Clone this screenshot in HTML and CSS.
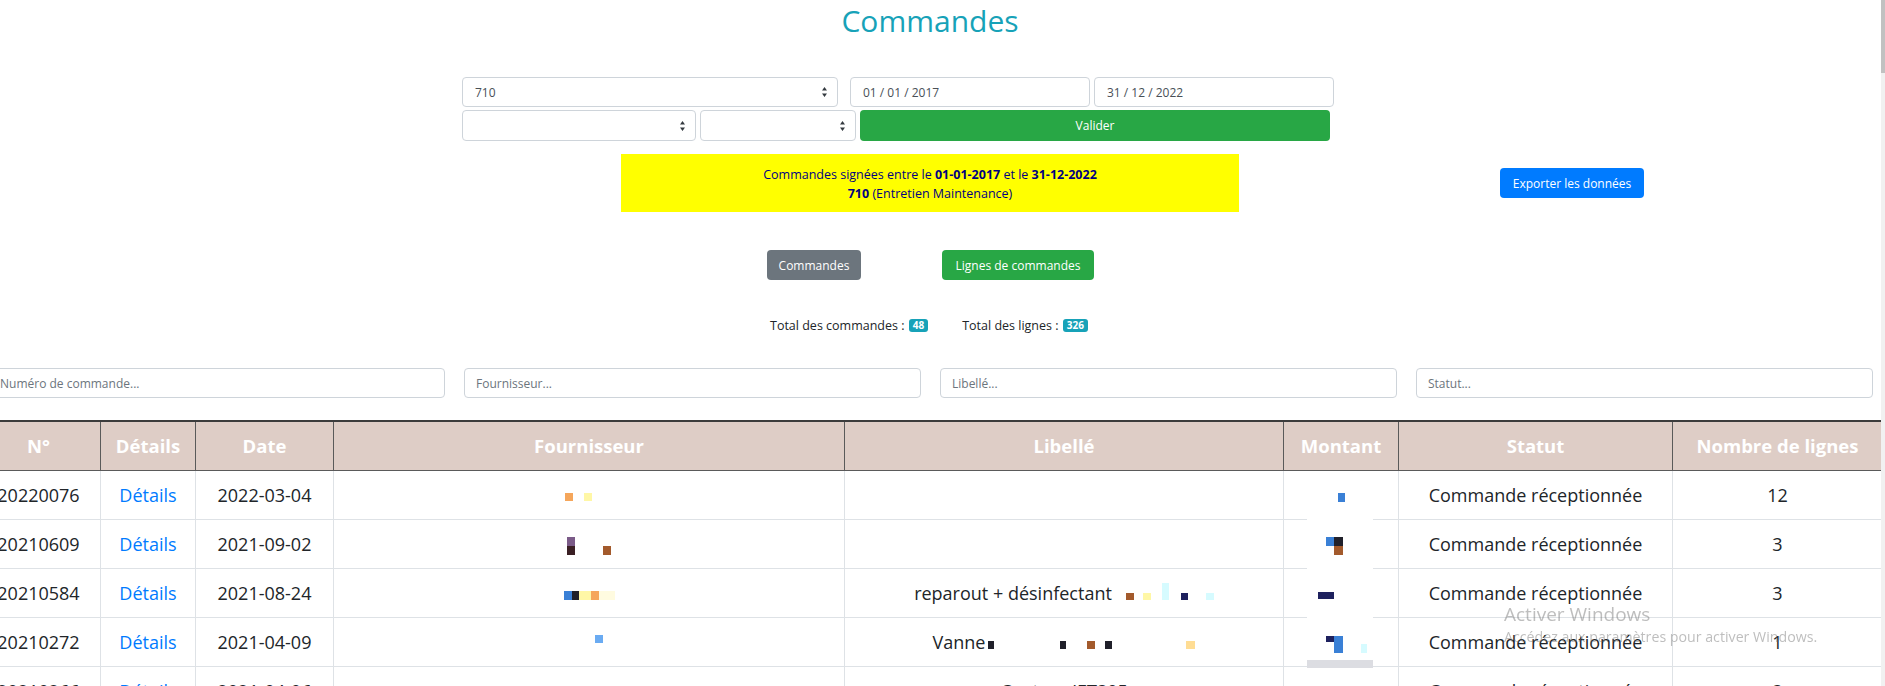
FILE: index.html
```html
<!DOCTYPE html>
<html lang="fr">
<head>
<meta charset="utf-8">
<title>Commandes</title>
<link rel="stylesheet" href="styles.css">
</head>
<body>
<div class="page">
  <h1 class="title">Commandes</h1>

  <div class="filters">
    <div class="frow frow-1">
      <div class="ctrl sel sel-main"><span>710</span><svg class="arr" width="5" height="10" viewBox="0 0 5 10"><path d="M2.5 0 L5 3.6 L0 3.6 Z M2.5 10 L5 6.4 L0 6.4 Z" fill="#343a40"/></svg></div>
      <div class="ctrl date">01 / 01 / 2017</div>
      <div class="ctrl date">31 / 12 / 2022</div>
    </div>
    <div class="frow frow-2">
      <div class="ctrl sel sel-a"><span></span><svg class="arr" width="5" height="10" viewBox="0 0 5 10"><path d="M2.5 0 L5 3.6 L0 3.6 Z M2.5 10 L5 6.4 L0 6.4 Z" fill="#343a40"/></svg></div>
      <div class="ctrl sel sel-b"><span></span><svg class="arr" width="5" height="10" viewBox="0 0 5 10"><path d="M2.5 0 L5 3.6 L0 3.6 Z M2.5 10 L5 6.4 L0 6.4 Z" fill="#343a40"/></svg></div>
      <button class="btn btn-valider">Valider</button>
    </div>
  </div>

  <div class="info-row">
    <div class="notice">
      <div>Commandes signées entre le <b>01-01-2017</b> et le <b>31-12-2022</b></div>
      <div><b>710</b> (Entretien Maintenance)</div>
    </div>
    <button class="btn btn-export">Exporter les données</button>
  </div>

  <div class="tabs">
    <button class="btn btn-gray">Commandes</button>
    <button class="btn btn-lignes">Lignes de commandes</button>
  </div>

  <div class="totals">
    <span class="total">Total des commandes : <span class="badge">48</span></span>
    <span class="total">Total des lignes : <span class="badge">326</span></span>
  </div>

  <div class="search-row">
    <div class="ctrl search">Numéro de commande...</div>
    <div class="ctrl search">Fournisseur...</div>
    <div class="ctrl search">Libellé...</div>
    <div class="ctrl search">Statut...</div>
  </div>

  <div class="table-wrap">
    <table class="orders">
      <colgroup>
        <col class="w1"><col class="w2"><col class="w3"><col class="w4"><col class="w5"><col class="w6"><col class="w7"><col class="w8">
      </colgroup>
      <thead>
        <tr>
          <th>N°</th><th>Détails</th><th>Date</th><th>Fournisseur</th><th>Libellé</th><th>Montant</th><th>Statut</th><th>Nombre de lignes</th>
        </tr>
      </thead>
      <tbody>
        <tr>
          <td>20220076</td>
          <td><a class="lnk" href="#">Détails</a></td>
          <td>2022-03-04</td>
          <td><span class="grp sh-l22"><span class="sq o"></span><span class="sq y ml11"></span></span></td>
          <td></td>
          <td><span class="grp"><span class="sq b w7 h9"></span></span></td>
          <td>Commande réceptionnée</td>
          <td>12</td>
        </tr>
        <tr>
          <td>20210609</td>
          <td><a class="lnk" href="#">Détails</a></td>
          <td>2021-09-02</td>
          <td><span class="grp end"><span class="stack"><span class="sq pu h9"></span><span class="sq dk h9"></span></span><span class="sq br h9 ml28"></span></span></td>
          <td></td>
          <td><span class="grp sh-l14"><span class="quad"><span class="q b"></span><span class="q d"></span><span class="q"></span><span class="q br"></span></span></span></td>
          <td>Commande réceptionnée</td>
          <td>3</td>
        </tr>
        <tr>
          <td>20210584</td>
          <td><a class="lnk" href="#">Détails</a></td>
          <td>2021-08-24</td>
          <td><span class="grp"><span class="sq b h9"></span><span class="sq d w7 h9"></span><span class="sq y w12 h9"></span><span class="sq o h9"></span><span class="sq fy w16 h9"></span></span></td>
          <td>reparout + désinfectant<span class="sq br ml14 h7"></span><span class="sq y ml9 h7"></span><span class="sq cy w7 h17 ml11"></span><span class="sq nv w7 h7 ml12"></span><span class="sq cy h7 ml18"></span></td>
          <td><span class="grp sh-l30"><span class="sq nv w16 h7"></span></span></td>
          <td>Commande réceptionnée</td>
          <td>3</td>
        </tr>
        <tr>
          <td>20210272</td>
          <td><a class="lnk" href="#">Détails</a></td>
          <td>2021-04-09</td>
          <td><span class="grp sh-r20 up10"><span class="sq lb h8"></span></span></td>
          <td>Vanne<span class="sq d w6 h8 ml3"></span><span class="sq d w6 h8 ml66"></span><span class="sq br h8 ml21"></span><span class="sq d w7 h8 ml10"></span><span class="sq ly w9 h8 ml74"></span></td>
          <td><span class="grp start sh-r10"><span class="sq nv h6"></span><span class="sq b w9 h17"></span><span class="sq cy w6 h9 ml18 dn8"></span></span></td>
          <td>Commande réceptionnée</td>
          <td>1</td>
        </tr>
        <tr>
          <td>20210266</td>
          <td><a class="lnk" href="#">Détails</a></td>
          <td>2021-04-06</td>
          <td><span class="grp top"><span class="sq cy w6 h8"></span><span class="sq b w10 h8"></span><span class="sq cy w10 h8 ml4"></span><span class="sq o w8 h8 ml8"></span><span class="sq lb w6 h8"></span><span class="sq b w6 h8 ml14"></span></span></td>
          <td>Capteur JET305</td>
          <td></td>
          <td>Commande réceptionnée</td>
          <td>3</td>
        </tr>
      </tbody>
    </table>
    <div class="mask"></div>
    <div class="mask-bar"></div>
  </div>
</div>

<div class="watermark">
  <div class="wm-1">Activer Windows</div>
  <div class="wm-2">Accédez aux paramètres pour activer Windows.</div>
</div>
<div class="scrollbar"><div class="thumb"></div></div>
</body>
</html>
```

FILE: styles.css
```css
* { box-sizing: border-box; }

html, body {
  margin: 0;
  padding: 0;
  overflow: hidden;
}

body {
  width: 1885px;
  height: 686px;
  background: #fff;
  color: #212529;
  font-family: "Open Sans", "Noto Sans", "DejaVu Sans", sans-serif;
}

.page {
  width: 1885px;
}

.title {
  width: 1860px;
  margin: 0;
  padding-top: 3px;
  height: 39px;
  line-height: 36px;
  text-align: center;
  font-size: 30px;
  font-weight: 400;
  color: #17a2b8;
}

/* ---------- filter form ---------- */
.filters {
  margin-top: 38px;
  margin-left: 462px;
  width: 872px;
  display: flex;
  flex-direction: column;
  gap: 3px;
}

.frow {
  display: flex;
}

.frow-1 { height: 30px; }
.frow-2 { height: 31px; gap: 4px; }

.ctrl {
  display: flex;
  align-items: center;
  height: 100%;
  border: 1px solid #ced4da;
  border-radius: 4px;
  padding: 0 12px;
  font-size: 12px;
  color: #495057;
  background: #fff;
}

.sel { justify-content: space-between; padding-right: 10px; }
.sel-main { width: 376px; margin-right: 12px; }
.sel-a { width: 234px; }
.sel-b { width: 156px; }
.arr { display: block; }

.date { width: 240px; }
.frow-1 .date + .date { margin-left: 4px; }

.btn {
  font-family: inherit;
  border: 0;
  border-radius: 4px;
  color: #fff;
  font-size: 12px;
  padding: 0;
  cursor: pointer;
}

.btn-valider {
  width: 470px;
  height: 31px;
  background: #28a745;
}

/* ---------- info ---------- */
.info-row {
  display: flex;
  align-items: center;
  margin-top: 13px;
}

.notice {
  margin-left: 621px;
  width: 618px;
  height: 58px;
  background: #ffff00;
  color: #000080;
  font-size: 12.5px;
  line-height: 19.5px;
  text-align: center;
  display: flex;
  flex-direction: column;
  justify-content: center;
  padding-top: 2px;
}

.notice b { font-weight: 700; }

.btn-export {
  margin-left: 261px;
  width: 144px;
  height: 30px;
  background: #007bff;
}

/* ---------- tabs ---------- */
.tabs {
  display: flex;
  margin-top: 38px;
  margin-left: 767px;
  gap: 81px;
}

.btn-gray {
  width: 94px;
  height: 30px;
  background: #6c757d;
}

.btn-lignes {
  width: 152px;
  height: 30px;
  background: #28a745;
}

/* ---------- totals ---------- */
.totals {
  display: flex;
  margin-top: 35px;
  margin-left: 770px;
  height: 20px;
  align-items: center;
  gap: 34px;
  font-size: 12.5px;
}

.badge {
  display: inline-block;
  background: #17a2b8;
  color: #fff;
  font-size: 10px;
  font-weight: 700;
  line-height: 13px;
  padding: 0 4px;
  border-radius: 3px;
  margin-left: 1px;
  vertical-align: 1px;
}

/* ---------- search ---------- */
.search-row {
  display: flex;
  gap: 19px;
  margin-top: 33px;
  margin-left: -12px;
  height: 30px;
}

.search {
  width: 457px;
  color: #6c757d;
  padding-left: 11px;
}

/* ---------- table ---------- */
.table-wrap {
  position: relative;
  margin-top: 22px;
  margin-left: -24px;
  width: 1906px;
}

.orders {
  width: 1906px;
  table-layout: fixed;
  border-collapse: collapse;
}

.w1 { width: 124px; }
.w2 { width: 95px; }
.w3 { width: 138px; }
.w4 { width: 511px; }
.w5 { width: 439px; }
.w6 { width: 115px; }
.w7 { width: 274px; }
.w8 { width: 210px; }

.orders th {
  height: 49px;
  background: #decdc6;
  color: #fff;
  font-size: 18.5px;
  font-weight: 700;
  text-align: center;
  border: 1px solid #5a5a5a;
  border-top: 2px solid #3c3c3c;
  padding: 0;
}

.orders td {
  height: 49px;
  border: 1px solid #dee2e6;
  text-align: center;
  font-size: 18px;
  color: #212529;
  padding: 1px 0 0;
  white-space: nowrap;
}

.orders tbody tr:first-child td { border-top: 0; }

.lnk {
  color: #007bff;
  text-decoration: none;
}

/* redaction pixels */
.grp {
  display: inline-flex;
  align-items: center;
  vertical-align: middle;
  position: relative;
  z-index: 2;
}
.grp.end { align-items: flex-end; }
.grp.start { align-items: flex-start; }
.grp.top { vertical-align: top; margin-top: 20px; }

.sq {
  display: inline-block;
  width: 8px;
  height: 8px;
  position: relative;
  z-index: 2;
}

td > .sq { vertical-align: baseline; }

.stack { display: flex; flex-direction: column; }

.quad {
  display: grid;
  grid-template-columns: 8px 9px;
  grid-template-rows: 9px 9px;
}

.q { display: block; }

.o  { background: #f5a65b; }
.y  { background: #fff7a6; }
.fy { background: #fffbe0; }
.ly { background: #ffdd94; }
.b  { background: #3a80d6; }
.lb { background: #6aabf2; }
.d  { background: #20202a; }
.dk { background: #3a1f24; }
.br { background: #a35a2c; }
.pu { background: #7b5b88; }
.cy { background: #d6fbff; }
.nv { background: #1e215e; }

.sq.w6  { width: 6px; }
.sq.w7  { width: 7px; }
.sq.w9  { width: 9px; }
.sq.w10 { width: 10px; }
.sq.w12 { width: 12px; }
.sq.w16 { width: 16px; }
.h6  { height: 6px !important; }
.h7  { height: 7px !important; }
.h8  { height: 8px !important; }
.h9  { height: 9px !important; }
.h17 { height: 17px !important; }

.ml3  { margin-left: 3px; }
.ml4  { margin-left: 4px; }
.ml8  { margin-left: 8px; }
.ml9  { margin-left: 9px; }
.ml10 { margin-left: 10px; }
.ml11 { margin-left: 11px; }
.ml12 { margin-left: 12px; }
.ml14 { margin-left: 14px; }
.ml18 { margin-left: 18px; }
.ml21 { margin-left: 21px; }
.ml28 { margin-left: 28px; }
.ml66 { margin-left: 66px; }
.ml74 { margin-left: 74px; }
.dn8 { margin-top: 8px; }

.sh-l14 { margin-right: 14px; }
.sh-l22 { margin-right: 22px; }
.sh-l30 { margin-right: 30px; }
.sh-r10 { margin-left: 10px; }
.sh-r20 { margin-left: 20px; }
.up10 { margin-bottom: 10px; }

/* overlay in the Montant column */
.mask {
  position: absolute;
  left: 1331px;
  top: 97px;
  width: 66px;
  height: 143px;
  background: #fff;
  z-index: 1;
}

.mask-bar {
  position: absolute;
  left: 1331px;
  top: 240px;
  width: 66px;
  height: 8px;
  background: #dcdde2;
  z-index: 1;
}

/* ---------- windows watermark ---------- */
.watermark {
  position: fixed;
  left: 1504px;
  top: 601px;
  color: rgba(110, 110, 110, 0.45);
  pointer-events: none;
  z-index: 5;
}

.wm-1 { font-size: 19px; line-height: 26px; }
.wm-2 { font-size: 14.2px; line-height: 20px; }

/* ---------- scrollbar sliver ---------- */
.scrollbar {
  position: fixed;
  right: 0;
  top: 0;
  width: 4px;
  height: 686px;
  background: #f1f1f1;
  z-index: 6;
}

.thumb {
  width: 4px;
  height: 73px;
  background: #c1c1c1;
}
```
